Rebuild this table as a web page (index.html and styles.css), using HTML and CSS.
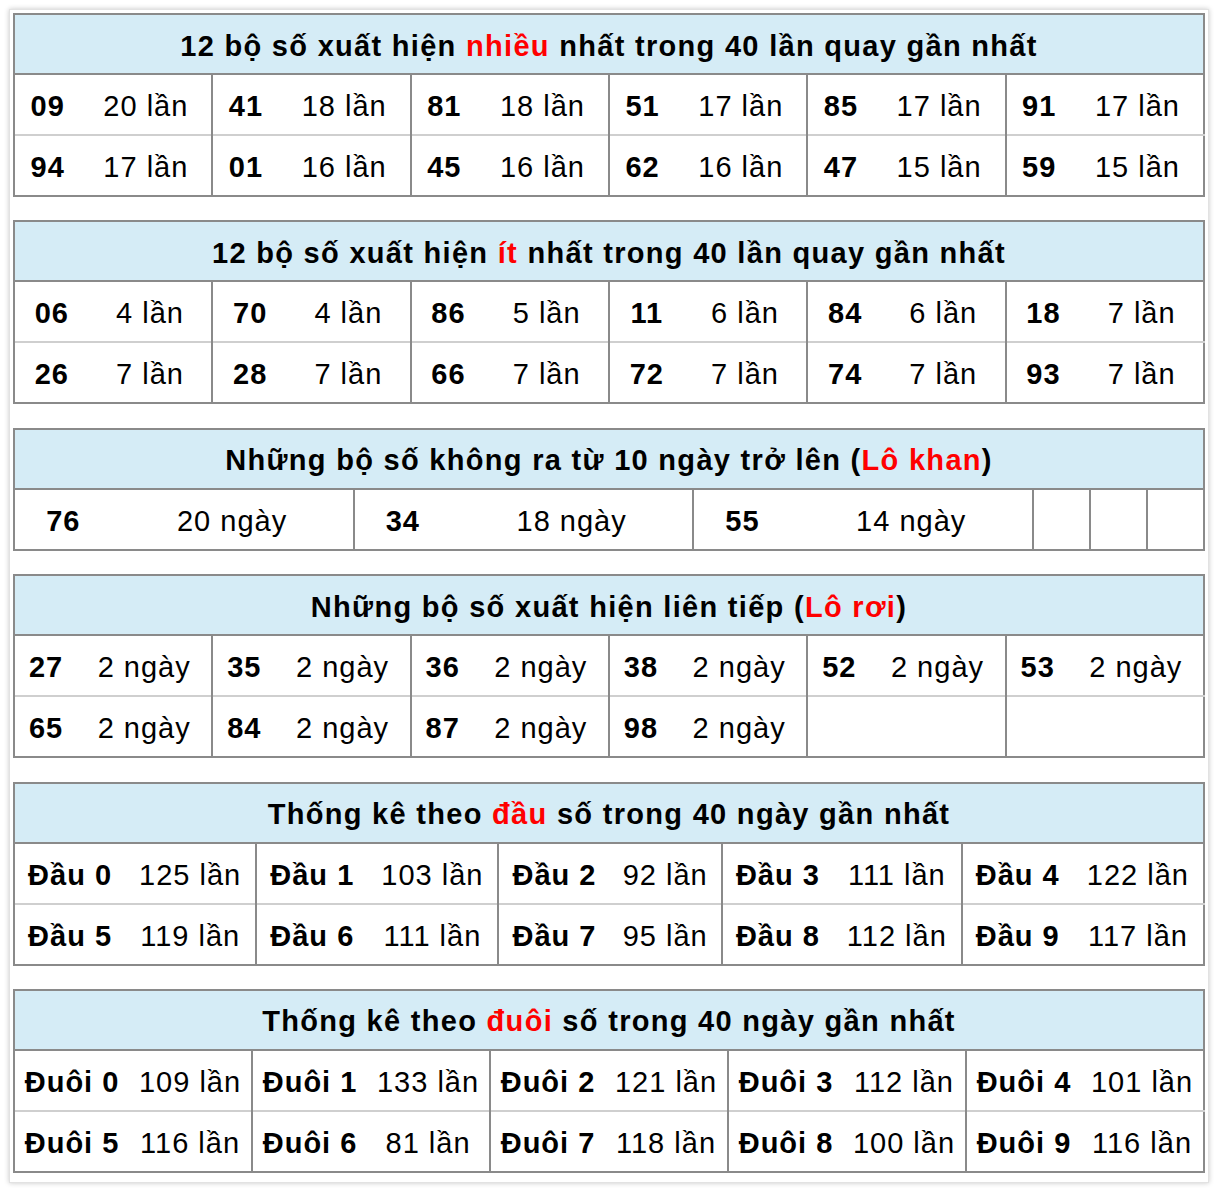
FILE: index.html
```html
<!DOCTYPE html>
<html lang="vi">
<head>
<meta charset="utf-8">
<title>Thống kê lô tô</title>
<link rel="stylesheet" href="styles.css">
</head>
<body>
<div class="box">
  <table class="stat">
    <tr><th colspan="12">12 bộ số xuất hiện <span class="hl">nhiều</span> nhất trong 40 lần quay gần nhất</th></tr>
    <tr>
      <td class="n">09</td><td class="c">20 lần</td>
      <td class="n">41</td><td class="c">18 lần</td>
      <td class="n">81</td><td class="c">18 lần</td>
      <td class="n">51</td><td class="c">17 lần</td>
      <td class="n">85</td><td class="c">17 lần</td>
      <td class="n">91</td><td class="c">17 lần</td>
    </tr>
    <tr class="r2">
      <td class="n">94</td><td class="c">17 lần</td>
      <td class="n">01</td><td class="c">16 lần</td>
      <td class="n">45</td><td class="c">16 lần</td>
      <td class="n">62</td><td class="c">16 lần</td>
      <td class="n">47</td><td class="c">15 lần</td>
      <td class="n">59</td><td class="c">15 lần</td>
    </tr>
  </table>

  <table class="stat">
    <tr><th colspan="12">12 bộ số xuất hiện <span class="hl">ít</span> nhất trong 40 lần quay gần nhất</th></tr>
    <tr>
      <td class="n">06</td><td class="c">4 lần</td>
      <td class="n">70</td><td class="c">4 lần</td>
      <td class="n">86</td><td class="c">5 lần</td>
      <td class="n">11</td><td class="c">6 lần</td>
      <td class="n">84</td><td class="c">6 lần</td>
      <td class="n">18</td><td class="c">7 lần</td>
    </tr>
    <tr class="r2">
      <td class="n">26</td><td class="c">7 lần</td>
      <td class="n">28</td><td class="c">7 lần</td>
      <td class="n">66</td><td class="c">7 lần</td>
      <td class="n">72</td><td class="c">7 lần</td>
      <td class="n">74</td><td class="c">7 lần</td>
      <td class="n">93</td><td class="c">7 lần</td>
    </tr>
  </table>

  <table class="stat">
    <tr><th colspan="12">Những bộ số không ra từ 10 ngày trở lên (<span class="hl">Lô khan</span>)</th></tr>
    <tr>
      <td class="n">76</td><td class="c">20 ngày</td>
      <td class="n">34</td><td class="c">18 ngày</td>
      <td class="n">55</td><td class="c">14 ngày</td>
      <td class="n e"></td><td class="c e"></td>
      <td class="n e"></td><td class="c e"></td>
      <td class="n e"></td><td class="c e"></td>
    </tr>
  </table>

  <table class="stat">
    <tr><th colspan="12">Những bộ số xuất hiện liên tiếp (<span class="hl">Lô rơi</span>)</th></tr>
    <tr>
      <td class="n">27</td><td class="c">2 ngày</td>
      <td class="n">35</td><td class="c">2 ngày</td>
      <td class="n">36</td><td class="c">2 ngày</td>
      <td class="n">38</td><td class="c">2 ngày</td>
      <td class="n">52</td><td class="c">2 ngày</td>
      <td class="n">53</td><td class="c">2 ngày</td>
    </tr>
    <tr class="r2">
      <td class="n">65</td><td class="c">2 ngày</td>
      <td class="n">84</td><td class="c">2 ngày</td>
      <td class="n">87</td><td class="c">2 ngày</td>
      <td class="n">98</td><td class="c">2 ngày</td>
      <td class="n"></td><td class="c"></td>
      <td class="n"></td><td class="c"></td>
    </tr>
  </table>

  <table class="stat">
    <tr><th colspan="10">Thống kê theo <span class="hl">đầu</span> số trong 40 ngày gần nhất</th></tr>
    <tr>
      <td class="n">Đầu 0</td><td class="c">125 lần</td>
      <td class="n">Đầu 1</td><td class="c">103 lần</td>
      <td class="n">Đầu 2</td><td class="c">92 lần</td>
      <td class="n">Đầu 3</td><td class="c">111 lần</td>
      <td class="n">Đầu 4</td><td class="c">122 lần</td>
    </tr>
    <tr class="r2">
      <td class="n">Đầu 5</td><td class="c">119 lần</td>
      <td class="n">Đầu 6</td><td class="c">111 lần</td>
      <td class="n">Đầu 7</td><td class="c">95 lần</td>
      <td class="n">Đầu 8</td><td class="c">112 lần</td>
      <td class="n">Đầu 9</td><td class="c">117 lần</td>
    </tr>
  </table>

  <table class="stat last">
    <tr><th colspan="10">Thống kê theo <span class="hl">đuôi</span> số trong 40 ngày gần nhất</th></tr>
    <tr>
      <td class="n">Đuôi 0</td><td class="c">109 lần</td>
      <td class="n">Đuôi 1</td><td class="c">133 lần</td>
      <td class="n">Đuôi 2</td><td class="c">121 lần</td>
      <td class="n">Đuôi 3</td><td class="c">112 lần</td>
      <td class="n">Đuôi 4</td><td class="c">101 lần</td>
    </tr>
    <tr class="r2">
      <td class="n">Đuôi 5</td><td class="c">116 lần</td>
      <td class="n">Đuôi 6</td><td class="c">81 lần</td>
      <td class="n">Đuôi 7</td><td class="c">118 lần</td>
      <td class="n">Đuôi 8</td><td class="c">100 lần</td>
      <td class="n">Đuôi 9</td><td class="c">116 lần</td>
    </tr>
  </table>
</div>
</body>
</html>
```

FILE: styles.css
```css
html, body {
  margin: 0;
  padding: 0;
  background: #fff;
}
body {
  font-family: "Liberation Sans", Arial, Helvetica, sans-serif;
  color: #000;
}
.box {
  margin: 9px;
  padding: 3px 3px 9px 3px;
  border: 1px solid #e2e2e2;
  box-shadow: 0 0 5px rgba(0, 0, 0, 0.22);
  background: #fff;
}
.stat {
  width: 100%;
  border-collapse: collapse;
  border: 2px solid #8a8a8a;
  margin: 0 0 23.4px 0;
  font-size: 29px;
  letter-spacing: 1px;
}
.stat.last {
  margin-bottom: 0;
}
.stat th {
  background: #d5ecf6;
  font-weight: bold;
  text-align: center;
  height: 54px;
  padding: 4px 0 0 0;
  letter-spacing: 1.3px;
  border-bottom: 2px solid #8a8a8a;
}
.stat td {
  height: 55px;
  padding: 4px 8px 0 8px;
  text-align: center;
  white-space: nowrap;
}
.stat td.e {
  padding: 4px 7px 0 7px;
}
.stat td.n {
  font-weight: bold;
  border-left: 2px solid #8a8a8a;
}
.stat tr.r2 td {
  border-top: 2px solid #cfcfcf;
}
.hl {
  color: #ff0000;
}
```
